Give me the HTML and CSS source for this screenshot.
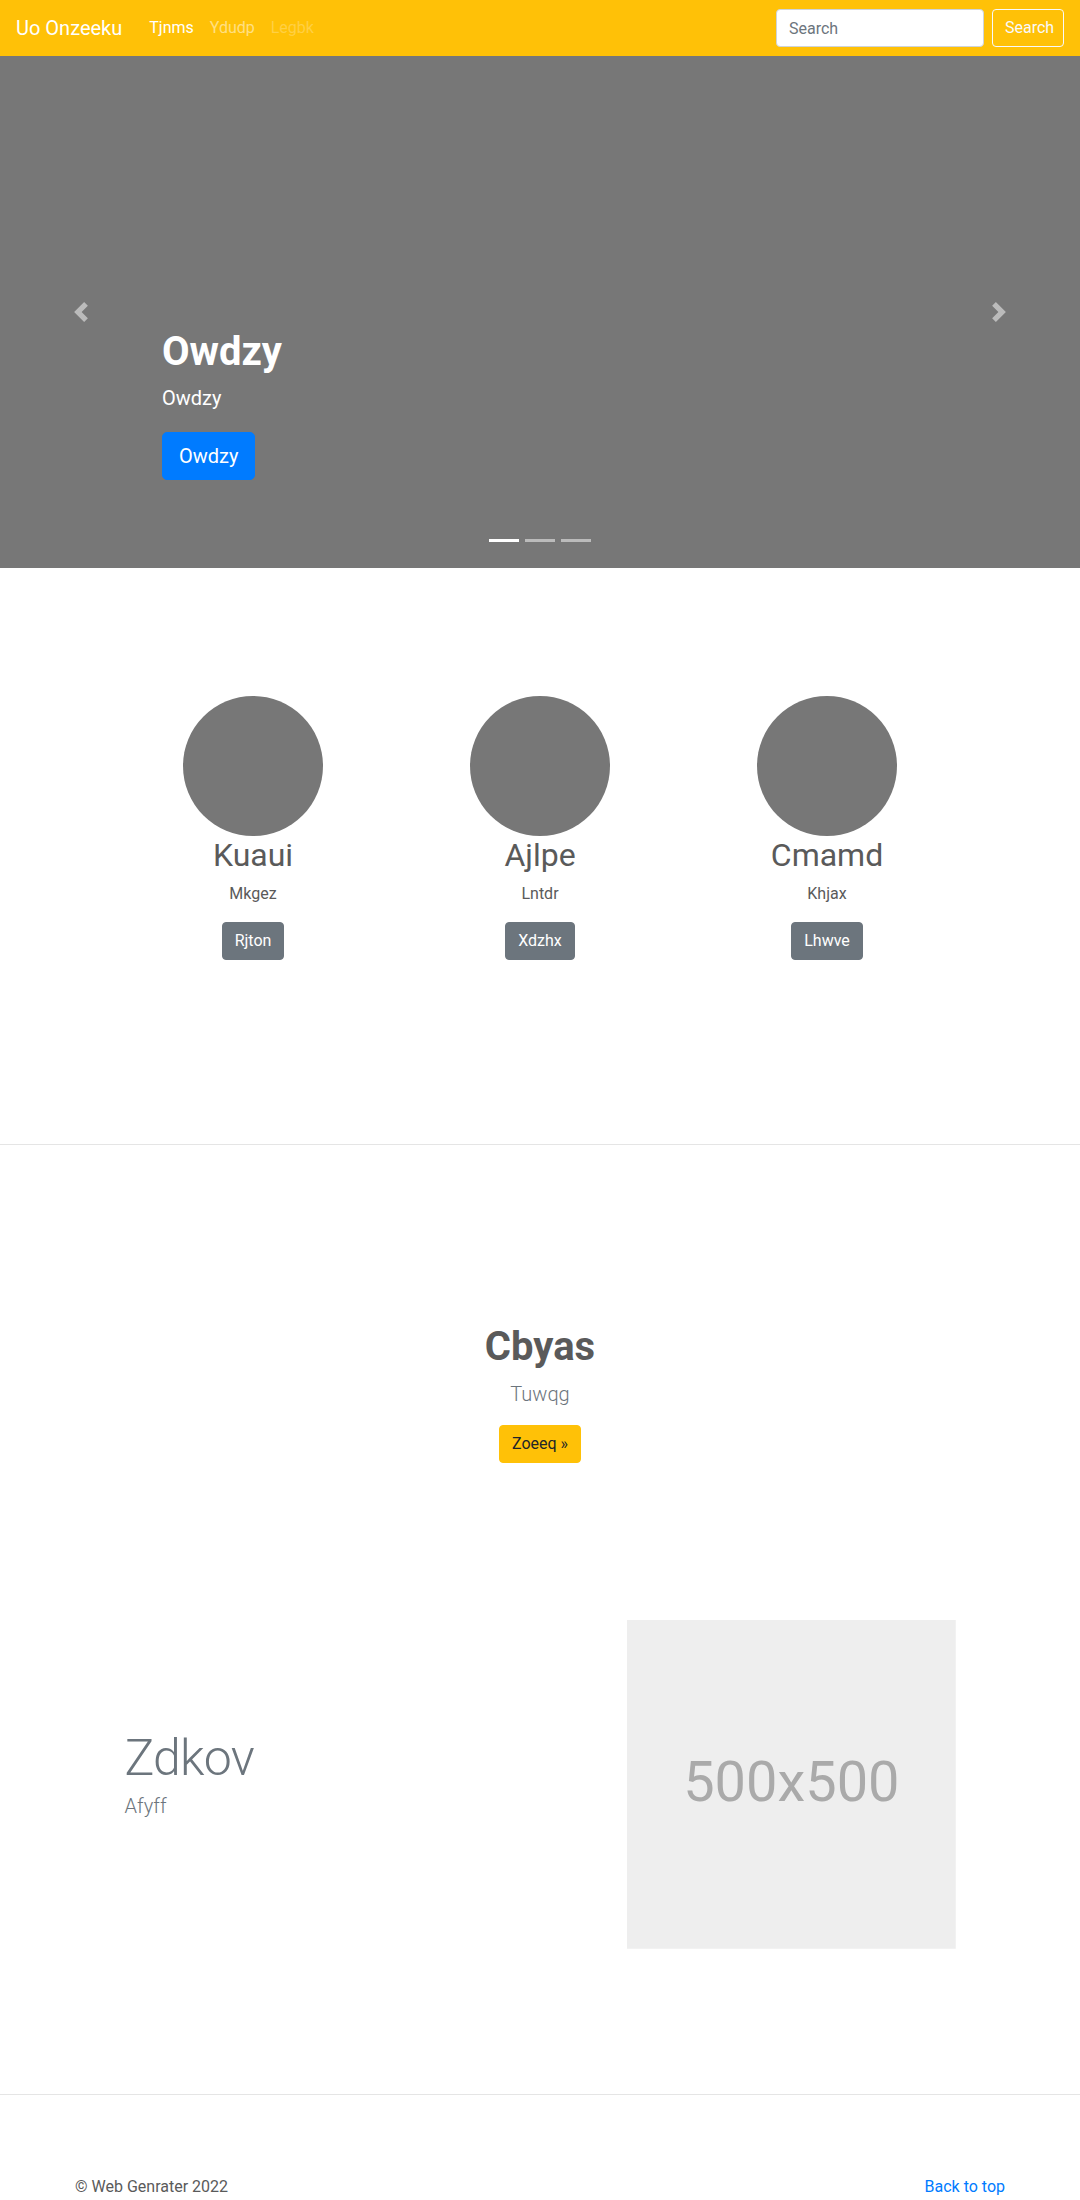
FILE: index.html
```
<!DOCTYPE html>
<html lang="en">
<head>
<meta charset="utf-8">
<title>Uo Onzeeku</title>
<link rel="stylesheet" href="styles.css">
</head>
<body>
<header class="navbar">
  <a class="brand" href="#">Uo Onzeeku</a>
  <nav class="nav">
    <a class="nav-link active" href="#">Tjnms</a>
    <a class="nav-link" href="#">Ydudp</a>
    <a class="nav-link disabled" href="#">Legbk</a>
  </nav>
  <form class="search">
    <input class="search-input" type="text" placeholder="Search">
    <button class="btn btn-outline-light search-btn" type="button">Search</button>
  </form>
</header>

<section class="carousel">
  <div class="carousel-caption">
    <h1 class="caption-title">Owdzy</h1>
    <p class="caption-text">Owdzy</p>
    <p class="caption-action"><a class="btn btn-lg btn-primary" href="#">Owdzy</a></p>
  </div>
  <a class="carousel-control prev" href="#">
    <svg width="20" height="20" viewBox="0 0 8 8"><path fill="#fff" d="M5.25 0l-4 4 4 4 1.5-1.5L4.25 4l2.5-2.5L5.25 0z"/></svg>
  </a>
  <a class="carousel-control next" href="#">
    <svg width="20" height="20" viewBox="0 0 8 8"><path fill="#fff" d="M2.75 0l-1.5 1.5L3.75 4l-2.5 2.5L2.75 8l4-4-4-4z"/></svg>
  </a>
  <ol class="indicators">
    <li class="active"></li>
    <li></li>
    <li></li>
  </ol>
</section>

<section class="marketing">
  <div class="wrap three-cols">
    <div class="col-item">
      <svg class="circle" width="140" height="140"><circle cx="70" cy="70" r="70" fill="#777"/></svg>
      <h2 class="col-title">Kuaui</h2>
      <p class="col-text">Mkgez</p>
      <p class="col-text"><a class="btn btn-secondary" href="#">Rjton</a></p>
    </div>
    <div class="col-item">
      <svg class="circle" width="140" height="140"><circle cx="70" cy="70" r="70" fill="#777"/></svg>
      <h2 class="col-title">Ajlpe</h2>
      <p class="col-text">Lntdr</p>
      <p class="col-text"><a class="btn btn-secondary" href="#">Xdzhx</a></p>
    </div>
    <div class="col-item">
      <svg class="circle" width="140" height="140"><circle cx="70" cy="70" r="70" fill="#777"/></svg>
      <h2 class="col-title">Cmamd</h2>
      <p class="col-text">Khjax</p>
      <p class="col-text"><a class="btn btn-secondary" href="#">Lhwve</a></p>
    </div>
  </div>
</section>

<hr class="divider">

<section class="jumbo">
  <h1 class="jumbo-title">Cbyas</h1>
  <p class="lead muted">Tuwqg</p>
  <p class="jumbo-action"><a class="btn btn-warning" href="#">Zoeeq &raquo;</a></p>
</section>

<section class="featurette">
  <div class="wrap feat-row">
    <div class="feat-text">
      <h2 class="feat-heading">Zdkov</h2>
      <p class="lead muted">Afyff</p>
    </div>
    <div class="feat-media">
      <svg class="placeholder" width="329" height="329" viewBox="0 0 329 329">
        <rect width="100%" height="100%" fill="#eee"/>
        <text x="50%" y="50%" fill="#aaa" dy=".3em" text-anchor="middle" class="ph-text">500x500</text>
      </svg>
    </div>
  </div>
</section>

<hr class="divider">

<footer class="footer">
  <p class="copy">&copy; Web Genrater 2022</p>
  <p class="top-link"><a href="#">Back to top</a></p>
</footer>
</body>
</html>
```

FILE: styles.css
```
* { box-sizing: border-box; }

html, body {
  margin: 0;
  padding: 0;
}

body {
  font-family: "Segoe UI", Roboto, "Helvetica Neue", Arial, "Noto Sans", sans-serif;
  font-size: 16px;
  line-height: 1.5;
  color: #5a5a5a;
  background: #fff;
}

a { text-decoration: none; }

p { margin: 0 0 16px; }

/* Navbar */
.navbar {
  height: 56px;
  background: #ffc107;
  display: flex;
  align-items: center;
  padding: 8px 16px;
}

.brand {
  font-size: 20px;
  line-height: 30px;
  color: #fff;
  margin-right: 19px;
  white-space: nowrap;
}

.nav {
  display: flex;
  flex: 1;
}

.nav-link {
  padding: 8px;
  color: rgba(255, 255, 255, .5);
  line-height: 24px;
}

.nav-link.active { color: #fff; }
.nav-link.disabled { color: rgba(255, 255, 255, .25); }

.search {
  display: flex;
  align-items: center;
}

.search-input {
  width: 208px;
  height: 38px;
  padding: 6px 12px;
  font: inherit;
  font-size: 16px;
  color: #495057;
  background: #fff;
  border: 1px solid #ced4da;
  border-radius: 4px;
  margin-right: 8px;
}

.search-input::placeholder { color: #6c757d; }

.search-btn { width: 72px; }

/* Buttons */
.btn {
  display: inline-block;
  font: inherit;
  font-size: 16px;
  line-height: 24px;
  padding: 6px 12px;
  border: 1px solid transparent;
  border-radius: 4px;
  cursor: pointer;
  text-align: center;
}

.btn-outline-light {
  color: #f8f9fa;
  border-color: #f8f9fa;
  background: transparent;
}

.btn-lg {
  font-size: 20px;
  line-height: 30px;
  padding: 8px 16px;
  border-radius: 5px;
}

.btn-primary { background: #007bff; border-color: #007bff; color: #fff; }
.btn-secondary { background: #6c757d; border-color: #6c757d; color: #fff; }
.btn-warning { background: #ffc107; border-color: #ffc107; color: #212529; }

/* Carousel */
.carousel {
  position: relative;
  height: 512px;
  background: #777;
  overflow: hidden;
}

.carousel-caption {
  position: absolute;
  left: 15%;
  right: 15%;
  bottom: 48px;
  padding: 20px 0;
  color: #fff;
  text-align: left;
  z-index: 10;
}

.caption-title {
  margin: 0 0 8px;
  font-size: 40px;
  font-weight: 700;
  line-height: 1.2;
}

.caption-text {
  font-size: 20px;
  line-height: 1.4;
  margin-bottom: 20px;
}

.caption-action { margin-bottom: 20px; }

.carousel-control {
  position: absolute;
  top: 0;
  bottom: 0;
  width: 15%;
  display: flex;
  align-items: center;
  justify-content: center;
  opacity: .5;
}

.carousel-control.prev { left: 0; }
.carousel-control.next { right: 0; }

.indicators {
  position: absolute;
  left: 0;
  right: 0;
  bottom: 10px;
  margin: 0 0 16px;
  padding: 0;
  list-style: none;
  display: flex;
  justify-content: center;
}

.indicators li {
  width: 30px;
  height: 3px;
  margin: 0 3px;
  background: #fff;
  opacity: .5;
}

.indicators li.active { opacity: 1; }

/* Shared wrapper */
.wrap {
  width: 861px;
  margin: 0 auto;
}

/* Marketing */
.marketing {
  padding: 128px 0 88px;
}

.three-cols {
  display: grid;
  grid-template-columns: repeat(3, 1fr);
}

.col-item {
  text-align: center;
  padding: 0 15px;
}

.circle {
  display: block;
  margin: 0 auto;
}

.col-title {
  margin: 0 0 8px;
  font-size: 32px;
  font-weight: 400;
  line-height: 1.2;
}

.col-text {
  margin: 0 12px 16px;
}

.divider {
  margin: 80px 0;
  border: 0;
  border-top: 1px solid rgba(0, 0, 0, .1);
  height: 0;
}

/* Jumbo */
.jumbo {
  margin-top: -80px;
  padding-top: 178px;
  text-align: center;
}

.jumbo-title {
  margin: 0 0 8px;
  font-size: 40px;
  font-weight: 700;
  line-height: 1.2;
  color: #5a5a5a;
}

.lead {
  font-size: 20px;
  font-weight: 300;
  line-height: 1.5;
}

.muted { color: #6c757d; }

/* Featurette */
.featurette {
  padding: 141px 0 65px;
}

.feat-row {
  display: grid;
  grid-template-columns: 7fr 5fr;
  align-items: center;
}

.feat-text,
.feat-media {
  padding: 0 15px;
}

.feat-heading {
  margin: 0 0 8px;
  font-size: 50px;
  font-weight: 300;
  line-height: 1;
  letter-spacing: -0.8px;
  color: #6c757d;
}

.placeholder {
  display: block;
  width: 100%;
  height: auto;
}

.ph-text {
  font-family: "Segoe UI", Roboto, "Helvetica Neue", Arial, sans-serif;
  font-size: 56px;
}

/* Footer */
.footer {
  width: 960px;
  margin: 0 auto;
  padding: 0 15px;
  display: flex;
  justify-content: space-between;
}

.top-link a { color: #007bff; }
```
